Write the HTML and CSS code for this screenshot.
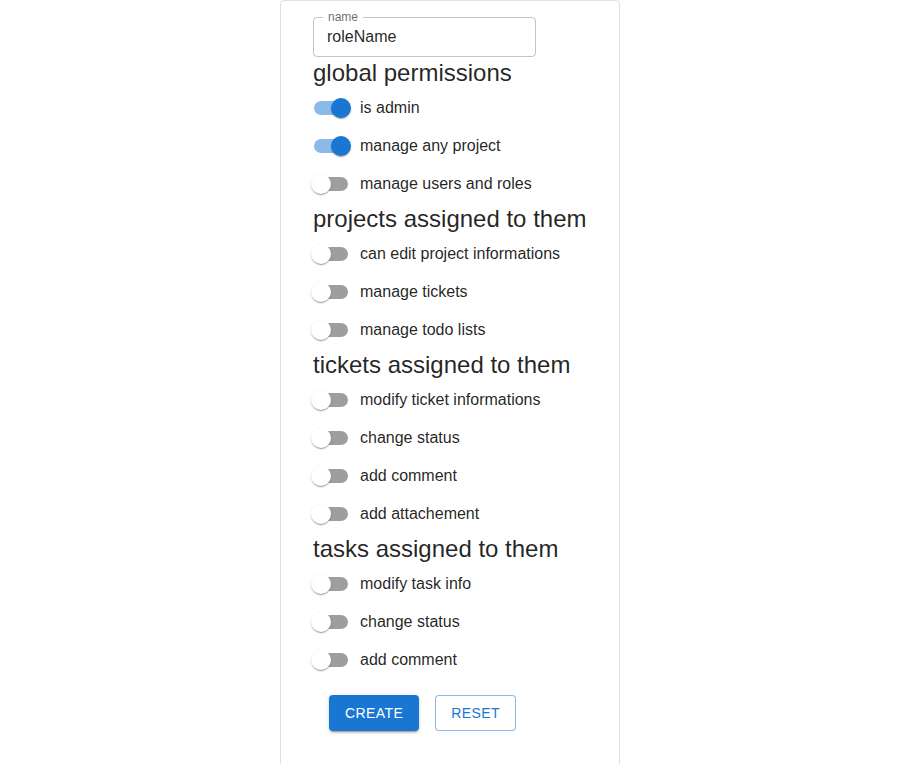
FILE: index.html
```html
<!DOCTYPE html>
<html lang="en">
<head>
<meta charset="utf-8">
<title>Role</title>
<link rel="stylesheet" href="styles.css">
</head>
<body>
<div class="card">
  <form class="form">
    <div class="field">
      <input class="input" type="text" value="roleName">
      <span class="legend">name</span>
    </div>

    <h5 class="heading">global permissions</h5>
    <label class="row"><span class="switch on"><span class="track"></span><span class="thumb"></span></span><span class="text">is admin</span></label>
    <label class="row"><span class="switch on"><span class="track"></span><span class="thumb"></span></span><span class="text">manage any project</span></label>
    <label class="row"><span class="switch"><span class="track"></span><span class="thumb"></span></span><span class="text">manage users and roles</span></label>

    <h5 class="heading">projects assigned to them</h5>
    <label class="row"><span class="switch"><span class="track"></span><span class="thumb"></span></span><span class="text">can edit project informations</span></label>
    <label class="row"><span class="switch"><span class="track"></span><span class="thumb"></span></span><span class="text">manage tickets</span></label>
    <label class="row"><span class="switch"><span class="track"></span><span class="thumb"></span></span><span class="text">manage todo lists</span></label>

    <h5 class="heading">tickets assigned to them</h5>
    <label class="row"><span class="switch"><span class="track"></span><span class="thumb"></span></span><span class="text">modify ticket informations</span></label>
    <label class="row"><span class="switch"><span class="track"></span><span class="thumb"></span></span><span class="text">change status</span></label>
    <label class="row"><span class="switch"><span class="track"></span><span class="thumb"></span></span><span class="text">add comment</span></label>
    <label class="row"><span class="switch"><span class="track"></span><span class="thumb"></span></span><span class="text">add attachement</span></label>

    <h5 class="heading">tasks assigned to them</h5>
    <label class="row"><span class="switch"><span class="track"></span><span class="thumb"></span></span><span class="text">modify task info</span></label>
    <label class="row"><span class="switch"><span class="track"></span><span class="thumb"></span></span><span class="text">change status</span></label>
    <label class="row"><span class="switch"><span class="track"></span><span class="thumb"></span></span><span class="text">add comment</span></label>

    <div class="actions">
      <button type="button" class="btn btn-contained">Create</button>
      <button type="button" class="btn btn-outlined">Reset</button>
    </div>
  </form>
</div>
</body>
</html>
```
FILE: styles.css
```css
html, body {
  margin: 0;
  padding: 0;
  background: #fff;
}
body {
  font-family: "Liberation Sans", Arial, sans-serif;
  color: rgba(0, 0, 0, 0.87);
}
.card {
  width: 340px;
  box-sizing: border-box;
  margin: 0 auto;
  border: 1px solid rgba(0, 0, 0, 0.12);
  border-radius: 4px;
  padding: 16px 32px 40px;
  min-height: 800px;
}
.form {
  display: flex;
  flex-direction: column;
  align-items: flex-start;
}
.field {
  position: relative;
  width: 223px;
  height: 40px;
  box-sizing: border-box;
  border: 1px solid rgba(0, 0, 0, 0.23);
  border-radius: 4px;
  display: flex;
}
.legend {
  position: absolute;
  top: -7px;
  left: 9px;
  padding: 0 5px;
  background: #fff;
  font-size: 12px;
  line-height: 12px;
  color: rgba(0, 0, 0, 0.6);
}
.input {
  flex: 1;
  min-width: 0;
  height: 38px;
  box-sizing: border-box;
  border: 0;
  outline: none;
  background: transparent;
  padding: 0 13px;
  font-family: "Liberation Sans", Arial, sans-serif;
  font-size: 16px;
  color: rgba(0, 0, 0, 0.87);
}
.heading {
  margin: 0;
  font-size: 24px;
  font-weight: 400;
  line-height: 32px;
  white-space: nowrap;
}
.row {
  display: flex;
  align-items: center;
  height: 38px;
  margin-left: -11px;
  cursor: pointer;
}
.switch {
  position: relative;
  width: 58px;
  height: 38px;
  padding: 12px;
  box-sizing: border-box;
  flex: none;
}
.track {
  display: block;
  width: 34px;
  height: 14px;
  border-radius: 7px;
  background: #000;
  opacity: 0.38;
}
.thumb {
  position: absolute;
  top: 9px;
  left: 9px;
  width: 20px;
  height: 20px;
  border-radius: 50%;
  background: #fff;
  box-shadow: 0 2px 1px -1px rgba(0,0,0,0.2), 0 1px 1px 0 rgba(0,0,0,0.14), 0 1px 3px 0 rgba(0,0,0,0.12);
}
.switch.on .track {
  background: #1976d2;
  opacity: 0.5;
}
.switch.on .thumb {
  left: 29px;
  background: #1976d2;
}
.text {
  font-size: 16px;
  line-height: 24px;
}
.actions {
  display: flex;
  gap: 16px;
  margin-top: 16px;
  padding-left: 16px;
}
.btn {
  height: 36px;
  box-sizing: border-box;
  border-radius: 4px;
  font-family: "Liberation Sans", Arial, sans-serif;
  font-size: 14px;
  font-weight: 400;
  letter-spacing: 0.02857em;
  text-transform: uppercase;
  line-height: 24px;
  cursor: pointer;
}
.btn-contained {
  padding: 6px 16px;
  border: 0;
  background: #1976d2;
  color: #fff;
  box-shadow: 0 3px 1px -2px rgba(0,0,0,0.2), 0 2px 2px 0 rgba(0,0,0,0.14), 0 1px 5px 0 rgba(0,0,0,0.12);
}
.btn-outlined {
  padding: 5px 15px;
  border: 1px solid rgba(25, 118, 210, 0.5);
  background: #fff;
  color: #1976d2;
}
```
